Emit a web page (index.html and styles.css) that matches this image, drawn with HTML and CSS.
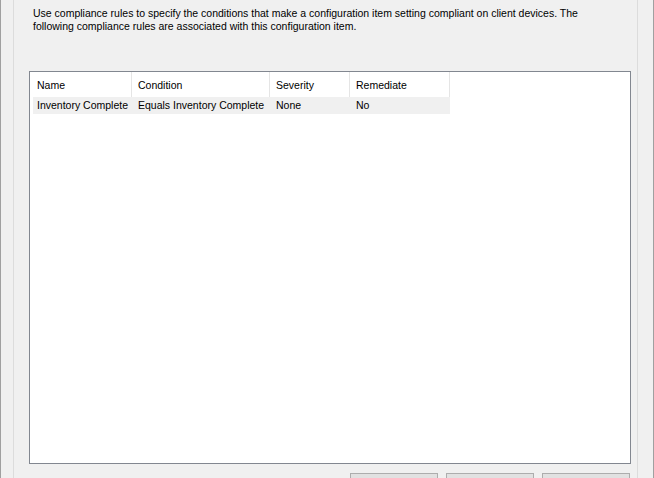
FILE: index.html
```html
<!DOCTYPE html>
<html>
<head>
<meta charset="utf-8">
<link rel="stylesheet" href="styles.css">
</head>
<body>
<div class="frame">
  <div class="edge-dark"></div>
  <div class="strip"></div>
  <div class="edge-light"></div>
  <div class="panel">
    <p class="intro">Use compliance rules to specify the conditions that make a configuration item setting compliant on client devices. The following compliance rules are associated with this configuration item.</p>
    <div class="list">
      <div class="header">
        <div class="hcell c1">Name</div>
        <div class="hcell c2">Condition</div>
        <div class="hcell c3">Severity</div>
        <div class="hcell c4">Remediate</div>
      </div>
      <div class="row">
        <div class="cell r1">Inventory Complete</div>
        <div class="cell c2">Equals Inventory Complete</div>
        <div class="cell c3">None</div>
        <div class="cell c4">No</div>
      </div>
    </div>
    <div class="buttons">
      <div class="btn"></div>
      <div class="btn"></div>
      <div class="btn"></div>
    </div>
  </div>
  <div class="edge-light"></div>
  <div class="strip"></div>
  <div class="edge-dark"></div>
</div>
</body>
</html>
```
FILE: styles.css
```css
html, body {
  margin: 0;
  padding: 0;
  width: 654px;
  height: 478px;
  overflow: hidden;
  background: #f0f0f0;
  font-family: "Liberation Sans", Arial, sans-serif;
  font-size: 10.5px;
  color: #000;
}
.frame {
  display: grid;
  grid-template-columns: 1px 12px 1px 623px 1px 15px 1px;
  height: 478px;
}
.edge-dark { background: #a0a0a0; }
.edge-light { background: #dcdcdc; }
.strip { background: #f0f0f0; }
.panel {
  display: flex;
  flex-direction: column;
  background: #f0f0f0;
  min-width: 0;
}
.intro {
  margin: 7px 0 0 19px;
  width: 575px;
  line-height: 13px;
  height: 26px;
}
.list {
  margin: 38px 0 0 15px;
  width: 600px;
  height: 391px;
  border: 1px solid #828790;
  background: #fff;
  flex-shrink: 0;
}
.header {
  display: flex;
  height: 25px;
}
.hcell {
  box-sizing: border-box;
  border-right: 1px solid #e5e5e5;
  padding: 1px 0 0 6px;
  line-height: 24px;
  white-space: nowrap;
}
.c1 { width: 102px; padding-left: 7px; }
.c2 { width: 138px; }
.c3 { width: 80px; }
.c4 { width: 100px; }
.row {
  display: flex;
  margin-left: 3px;
  width: 417px;
  height: 17px;
  background: #f0f0f0;
}
.cell {
  box-sizing: border-box;
  padding-left: 6px;
  line-height: 17px;
  white-space: nowrap;
}
.cell.r1 { width: 99px; padding-left: 4px; }
.buttons {
  display: flex;
  justify-content: flex-end;
  gap: 8px;
  margin-top: 9px;
  padding-right: 7px;
}
.btn {
  box-sizing: border-box;
  width: 88px;
  height: 23px;
  border: 1px solid #adadad;
  background: #e1e1e1;
  flex-shrink: 0;
}
```
